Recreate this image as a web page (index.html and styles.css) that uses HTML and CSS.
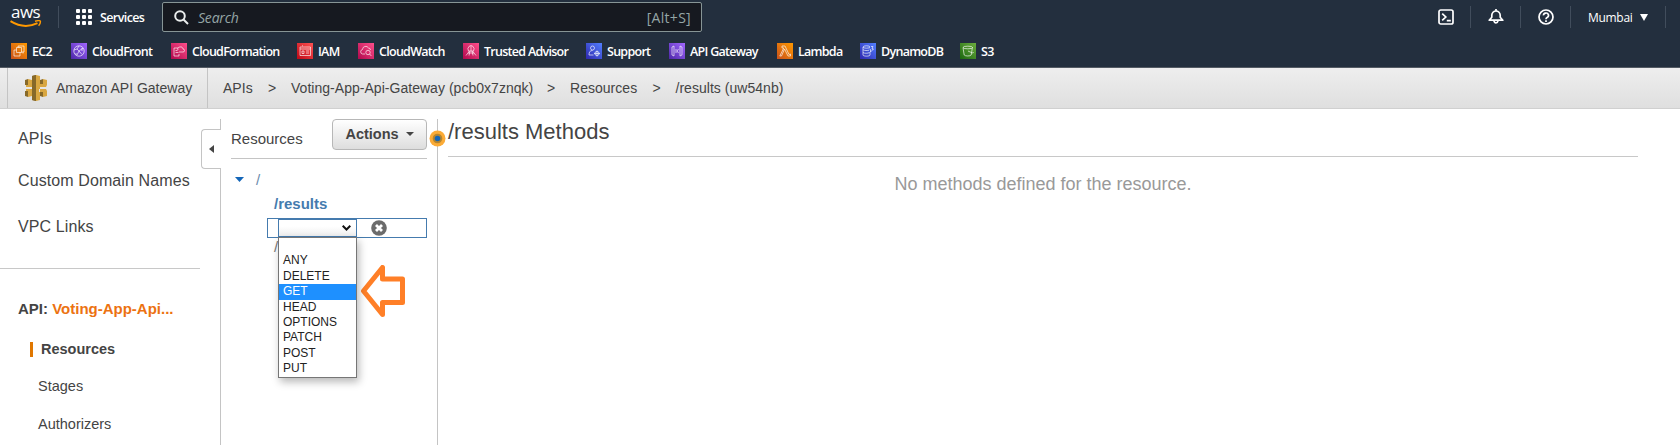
FILE: index.html
```html
<!DOCTYPE html>
<html lang="en">
<head>
<meta charset="utf-8">
<title>API Gateway</title>
<link rel="stylesheet" href="styles.css">
</head>
<body>
<header class="top">
  <div class="bar">
    <div class="logo">
      <span>aws</span>
      <svg width="32" height="8" viewBox="0 0 32 8"><path d="M.5 1.200Q14 9.600 27.500 3.200" fill="none" stroke="#f90" stroke-width="2"/><path d="M25 1.200Q29.600 0 30.400 1.200 30.600 3.600 28.600 5.800" fill="none" stroke="#f90" stroke-width="1.400"/></svg>
    </div>
    <span class="sep sep-logo"></span>
    <svg class="grid-icon" width="16" height="16" viewBox="0 0 16 16" fill="#fff">
      <rect width="4" height="4" rx="1"/><rect x="6" width="4" height="4" rx="1"/><rect x="12" width="4" height="4" rx="1"/>
      <rect y="6" width="4" height="4" rx="1"/><rect x="6" y="6" width="4" height="4" rx="1"/><rect x="12" y="6" width="4" height="4" rx="1"/>
      <rect y="12" width="4" height="4" rx="1"/><rect x="6" y="12" width="4" height="4" rx="1"/><rect x="12" y="12" width="4" height="4" rx="1"/>
    </svg>
    <span class="services">Services</span>
    <div class="search">
      <svg width="15" height="15" viewBox="0 0 15 15" fill="none" stroke="#eaeded" stroke-width="2"><circle cx="6" cy="6" r="4.800"/><path d="M9.500 9.500 14 14"/></svg>
      <span class="placeholder">Search</span><span class="key">[Alt+S]</span>
    </div>
    <div class="tools">
      <div class="tool"><svg width="16" height="16" viewBox="0 0 16 16" fill="none" stroke="#fff" stroke-width="1.700"><rect x="1" y="1" width="14" height="14" rx="1.800"/><path d="M4.200 4.600 7.800 8 4.200 11.400M8.800 11.600h4"/></svg></div>
      <div class="tool"><svg width="16" height="16" viewBox="0 0 16 16" fill="none" stroke="#fff" stroke-width="1.700" stroke-linejoin="round"><path d="M8 0v2M1.200 11.200h13.600L12.200 8.200V6.200a4.200 4.200 0 0 0-8.400 0v2z"/><path d="M5.900 11.600a2.200 3.200 0 0 0 4.200 0"/></svg></div>
      <div class="tool"><svg width="16" height="16" viewBox="0 0 16 16" fill="none" stroke="#fff" stroke-width="1.700"><circle cx="8" cy="8" r="7"/><path d="M5.500 6.400a2.500 2.300 0 1 1 3.600 2C8.200 8.800 8 9.200 8 10.200M8 11.300v1.700"/></svg></div>
      <div class="region"><span>Mumbai</span><svg width="8" height="7" viewBox="0 0 8 7" fill="#fff"><path d="M0 0h8L4 7z"/></svg></div>
    </div>
  </div>
  <nav class="shortcuts">
    <a class="sc w-ec2"><svg class="ic orange" viewBox="0 0 16 16"><path d="M5.500 4.500h5v5h-5zM7 4.500V3h6v6h-2.500M5.500 7H3v6h6V9.500M8 4.500V3.400M12 9v1.500"/></svg><span>EC2</span></a>
    <a class="sc w-cf"><svg class="ic purple" viewBox="0 0 16 16"><circle cx="8" cy="8" r="5.200"/><path d="M3 7l3-1 2 2 4-3M6 6l2-3M8 8l-2 4M8 8l3 3.500M4 11h2M11 5v3"/></svg><span>CloudFront</span></a>
    <a class="sc w-cfn"><svg class="ic pink" viewBox="0 0 16 16"><path d="M7 5H3v8h5v-2M4.500 7.500h2M4.500 9.500h3M7 7a2 2 0 0 1 2-3 2.200 2.200 0 0 1 3 2 1.500 1.500 0 0 1 0 3H8"/></svg><span>CloudFormation</span></a>
    <a class="sc w-iam"><svg class="ic red" viewBox="0 0 16 16"><path d="M3 4h10.500v8.500H3zM3 6h10M5 8h2v2.500H5zM9 8h3M9 10h3M5 2.800h1"/></svg><span>IAM</span></a>
    <a class="sc w-cw"><svg class="ic pink" viewBox="0 0 16 16"><path d="M7 11H4.500a2.300 2.300 0 0 1 0-4.500A3.200 3.200 0 0 1 10.500 5a2 2 0 0 1 2 2"/><circle cx="10" cy="9.500" r="2.200"/><path d="M11.600 11l1.800 2"/></svg><span>CloudWatch</span></a>
    <a class="sc w-ta"><svg class="ic pink" viewBox="0 0 16 16"><path d="M5.500 8a3 3.500 0 1 1 5 0zM6.500 8L3 12.500M9.500 8l3.500 4.500M7 8l-1 4.500M9 8l1 4.500M8 3v5M5 10h6"/></svg><span>Trusted Advisor</span></a>
    <a class="sc w-sup"><svg class="ic blue" viewBox="0 0 16 16"><circle cx="6.500" cy="5" r="2"/><path d="M7.500 12H3c0-3 1-4.500 3.500-4.500"/><circle cx="11" cy="10.500" r="2.100"/><path d="M11 7.500v6M8 10.500h6"/></svg><span>Support</span></a>
    <a class="sc w-api"><svg class="ic purple" viewBox="0 0 16 16"><path d="M5 3v10L3 12V4zM11 3v10l2-1V4zM7 6v4M9.500 6L8 8l1.500 2"/></svg><span>API Gateway</span></a>
    <a class="sc w-lam"><svg class="ic orange" viewBox="0 0 16 16"><path d="M5 3h3l4 8.500 1.500-.5v2H11L7.500 6 4.500 13H2.800L6.800 5H5z"/></svg><span>Lambda</span></a>
    <a class="sc w-ddb"><svg class="ic blue" viewBox="0 0 16 16"><ellipse cx="6.500" cy="4" rx="3.500" ry="1.200"/><path d="M3 4v8c0 1.500 7 1.500 7 0V9M3 6.700c1 1 5 1 6 .5M3 9.500c1 1 5 1 6.500 0M11 3.500h2L12 6h1.500L10.500 9V6.500L9.500 6"/></svg><span>DynamoDB</span></a>
    <a class="sc w-s3"><svg class="ic green" viewBox="0 0 16 16"><ellipse cx="7.800" cy="4.500" rx="4.800" ry="1.300"/><path d="M3 4.500L4.200 12c1 1.300 6 1.300 7 0l1.200-7.500M8 8l4 1.800c1 .4 1.800 0 1-.8"/></svg><span>S3</span></a>
  </nav>
</header>

<div class="crumbs">
  <div class="product">
    <svg width="22" height="26" viewBox="0 0 22 26">
      <path fill="#876929" d="M0 5l3-1v6H0zM0 16h3v6l-3-1zM3 10h5v1H3zM3 15h5v1H3zM7 1l4-1v26l-4-1zM15 5l3-1v6h-3zM15 16h3v6l-3-1z"/>
      <path fill="#d9a741" d="M11 0l4 1v24l-4 1zM3 4l4 1v4h4v3H1v-2h2zM3 22l4-1v-4h4v-3H1v2h2zM18 4l4 1v5l-1 2h-7V9h4zM18 22l4-1v-5l-1-2h-7v3h4z"/>
      <path fill="#876929" d="M7 1l4-1v26l-4-1z"/>
    </svg>
    <span>Amazon API Gateway</span>
  </div>
  <div class="trail">
    <span class="t1">APIs</span><span class="t2">&gt;</span><span class="t3">Voting-App-Api-Gateway (pcb0x7znqk)</span><span class="t4">&gt;</span><span class="t5">Resources</span><span class="t6">&gt;</span><span>/results (uw54nb)</span>
  </div>
</div>

<main class="page">
  <aside class="side">
    <a class="link l1">APIs</a>
    <a class="link l2">Custom Domain Names</a>
    <a class="link l3">VPC Links</a>
    <div class="rule"></div>
    <div class="api">API: <span>Voting-App-Api...</span></div>
    <a class="sub current">Resources</a>
    <a class="sub">Stages</a>
    <a class="sub">Authorizers</a>
    <div class="collapse"><svg width="5" height="8" viewBox="0 0 5 8"><path fill="#444" d="M5 0v8L0 4z"/></svg></div>
  </aside>
  <section class="tree">
    <div class="tree-head"><span>Resources</span><button class="actions">Actions<svg width="8" height="4" viewBox="0 0 8 4"><path fill="#444" d="M0 0h8L4 4z"/></svg></button></div>
    <div class="root"><svg width="9" height="5" viewBox="0 0 9 5"><path fill="#1466b8" d="M0 0h9L4.500 5z"/></svg><span>/</span></div>
    <div class="node">/results</div>
    <div class="method">
      <div class="select">
        <svg width="9" height="6" viewBox="0 0 9 6" fill="none" stroke="#111" stroke-width="2"><path d="M.700.800 4.500 4.500 8.300.800"/></svg>
        <ul class="menu"><li></li><li>ANY</li><li>DELETE</li><li class="on">GET</li><li>HEAD</li><li>OPTIONS</li><li>PATCH</li><li>POST</li><li>PUT</li></ul>
      </div>
      <svg class="cancel" width="16" height="16" viewBox="0 0 16 16"><circle cx="8" cy="8" r="7.800" fill="#6b6b6b"/><path d="M5 5l6 6M11 5l-6 6" stroke="#fff" stroke-width="2.800"/></svg>
    </div>
    <div class="behind">/</div>
    <svg class="arrow" width="44" height="52" viewBox="0 0 44 52"><path d="M2.500 26 21.500 2.500V14H41.500V37.500H21.500V49.500z" fill="#fff" stroke="#ff7f27" stroke-width="5" stroke-linejoin="round"/></svg>
    <svg class="handle" width="17" height="17" viewBox="0 0 17 17"><circle cx="8.500" cy="8.500" r="8" fill="#fbab36"/><circle cx="8.500" cy="8.500" r="4.800" fill="#b5852f"/><circle cx="8.500" cy="8.500" r="2.800" fill="#1466b8"/></svg>
  </section>
  <section class="detail">
    <h1>/results Methods</h1>
    <p>No methods defined for the resource.</p>
  </section>
</main>
</body>
</html>
```

FILE: styles.css
```css
* { box-sizing: border-box; }
body { margin: 0; height: 445px; overflow: hidden; background: #fff; color: #444; font-family: "Liberation Sans", Arial, sans-serif; }
svg { display: block; flex: none; }
.top { height: 68px; background: #232f3e; border-bottom: 1px solid #545b64; color: #fff; font-family: "Open Sans", "Noto Sans", sans-serif; }
.bar { display: flex; align-items: center; height: 34px; padding-left: 10px; }
.logo { width: 34px; height: 30px; padding-top: 0; font-size: 17px; font-weight: 500; line-height: 19px; letter-spacing: -0.5px; }
.logo span { display: block; padding-left: 1px; }
.logo svg { margin-top: -1px; }
.sep { width: 1px; height: 22px; background: #414d5c; }
.sep-logo { margin-left: 14px; }
.grid-icon { margin-left: 17px; }
.services { width: 62px; margin-left: 8px; font-size: 12.5px; font-weight: 600; letter-spacing: -0.6px; }
.search { display: flex; align-items: center; width: 540px; height: 30px; padding: 0 10px 0 11px; border: 1px solid #879596; border-radius: 2px; background: #161920; color: #95a5a6; font-size: 14px; }
.placeholder { flex: 1; margin-left: 9px; font-style: italic; letter-spacing: -0.2px; }
.key { letter-spacing: 0.3px; }
.tools { display: flex; align-items: center; margin-left: 719px; }
.tool { display: flex; justify-content: flex-end; width: 50px; padding-right: 16px; height: 22px; align-items: center; border-right: 1px solid #414d5c; }
.region { display: flex; align-items: center; width: 95px; height: 22px; padding-left: 17px; gap: 7px; border-right: 1px solid #414d5c; font-size: 12px; letter-spacing: -0.3px; }
.shortcuts { display: flex; height: 33px; padding: 1px 0 0 11px; font-size: 12.5px; font-weight: 600; }
.sc { display: flex; align-items: center; gap: 5px; white-space: nowrap; letter-spacing: -0.72px; }
.ic { width: 16px; height: 16px; fill: none; stroke: rgba(255, 255, 255, .8); stroke-width: .8; }
.orange { background: linear-gradient(45deg, #c8511b, #f90); }
.purple { background: linear-gradient(45deg, #4d27a8, #a166ff); }
.pink { background: linear-gradient(45deg, #b0084d, #ff4f8b); }
.red { background: linear-gradient(45deg, #bd0816, #ff5252); }
.blue { background: linear-gradient(45deg, #2e27ad, #527fff); }
.green { background: linear-gradient(45deg, #1b660f, #6cae3e); }
.w-ec2 { width: 60px; }
.w-cf { width: 100px; }
.w-cfn { width: 126px; }
.w-iam { width: 61px; }
.w-cw { width: 105px; }
.w-ta { width: 123px; }
.w-sup { width: 83px; }
.w-api { width: 108px; }
.w-lam { width: 83px; }
.w-ddb { width: 100px; }
.crumbs { display: flex; height: 41px; padding-left: 7px; background: linear-gradient(#eee, #dfdfdf); border-bottom: 1px solid #d0d0d0; font-size: 14px; }
.product { display: flex; align-items: center; width: 201px; padding-left: 17px; gap: 9px; border: solid #c4c4c4; border-width: 0 1px; }
.trail { display: flex; align-items: center; padding-left: 15px; white-space: nowrap; letter-spacing: 0.03px; }
.t1 { width: 45px; }
.t2, .t4, .t6 { width: 23px; }
.t3 { width: 256px; }
.t5 { width: 82.5px; }
.page { display: grid; grid-template-columns: 221px 217px 1fr; height: 326px; margin-top: 10px; }
.side { position: relative; border-right: 1px solid #c4c4c4; }
.link { display: block; padding-left: 18px; font-size: 16px; line-height: 20px; letter-spacing: 0.1px; }
.l1 { padding-top: 10px; }
.l2 { padding-top: 22px; }
.l3 { padding-top: 26px; }
.rule { width: 200px; height: 1px; margin-top: 31px; background: #c8c8c8; }
.api { margin: 30px 0 0 18px; font-size: 15px; font-weight: bold; line-height: 20px; white-space: nowrap; }
.api span { color: #ec7211; }
.sub { display: block; margin: 18px 0 0 38px; font-size: 14.5px; line-height: 20px; }
.current { height: 15px; margin: 23px 0 0 30px; padding-left: 8px; border-left: 3px solid #e07700; font-weight: bold; line-height: 14px; }
.current + .sub { margin-top: 19px; }
.collapse { position: absolute; left: 201px; top: 10px; display: flex; align-items: center; width: 20px; height: 40px; padding-left: 7px; background: #fff; border: 1px solid #c4c4c4; border-right: 0; border-radius: 4px 0 0 4px; }
.tree { position: relative; padding-left: 10px; padding-right: 10px; border-right: 1px solid #c4c4c4; }
.tree-head { display: flex; justify-content: space-between; height: 40px; border-bottom: 1px solid #c4c4c4; font-size: 15px; line-height: 39px; }
.actions { display: flex; align-items: center; justify-content: center; gap: 7px; width: 95px; height: 31px; padding: 0 0 1px; border: 1px solid #b7b7b7; border-radius: 4px; background: linear-gradient(#fff, #ddd); color: #444; font: bold 14.5px "Liberation Sans", Arial, sans-serif; }
.root { display: flex; align-items: center; gap: 12px; height: 20px; margin: 10px 0 0 4px; color: #6b8cad; font-size: 15px; }
.node { margin: 5px 0 0 43px; color: #457bae; font-size: 15px; font-weight: bold; line-height: 19px; }
.method { display: flex; align-items: center; width: 160px; height: 20px; margin: 5px 0 0 36px; padding-left: 10px; border: 1px solid #457bae; }
.select { position: relative; display: flex; align-items: center; justify-content: flex-end; width: 79px; height: 18px; padding-right: 5px; border: 1px solid #457bae; background: linear-gradient(0deg, #eee, #fff 60%); }
.cancel { margin-left: 14px; }
.menu { position: absolute; z-index: 2; left: -1px; top: 17px; width: 79px; height: 141px; margin: 0; padding: 0; list-style: none; background: #fff; border: 1px solid #767676; box-shadow: 2px 4px 8px rgba(0, 0, 0, .28); color: #222; font-size: 12px; line-height: 14.6px; }
.menu li { height: 15.4px; padding-left: 4px; }
.menu .on { background: #1e90ff; color: #fff; }
.behind { margin: -1px 0 0 43px; color: #777; font-size: 15px; line-height: 19px; }
.arrow { position: absolute; left: 140px; top: 146px; }
.handle { position: absolute; right: -9px; top: 11px; }
.detail { padding-left: 10px; }
.detail h1 { width: 1190px; height: 38px; margin: 0; border-bottom: 1px solid #c8c8c8; font-size: 22px; font-weight: normal; line-height: 26px; }
.detail p { width: 1190px; margin: 15px 0 0; color: #999; font-size: 18px; line-height: 24px; text-align: center; }
```
